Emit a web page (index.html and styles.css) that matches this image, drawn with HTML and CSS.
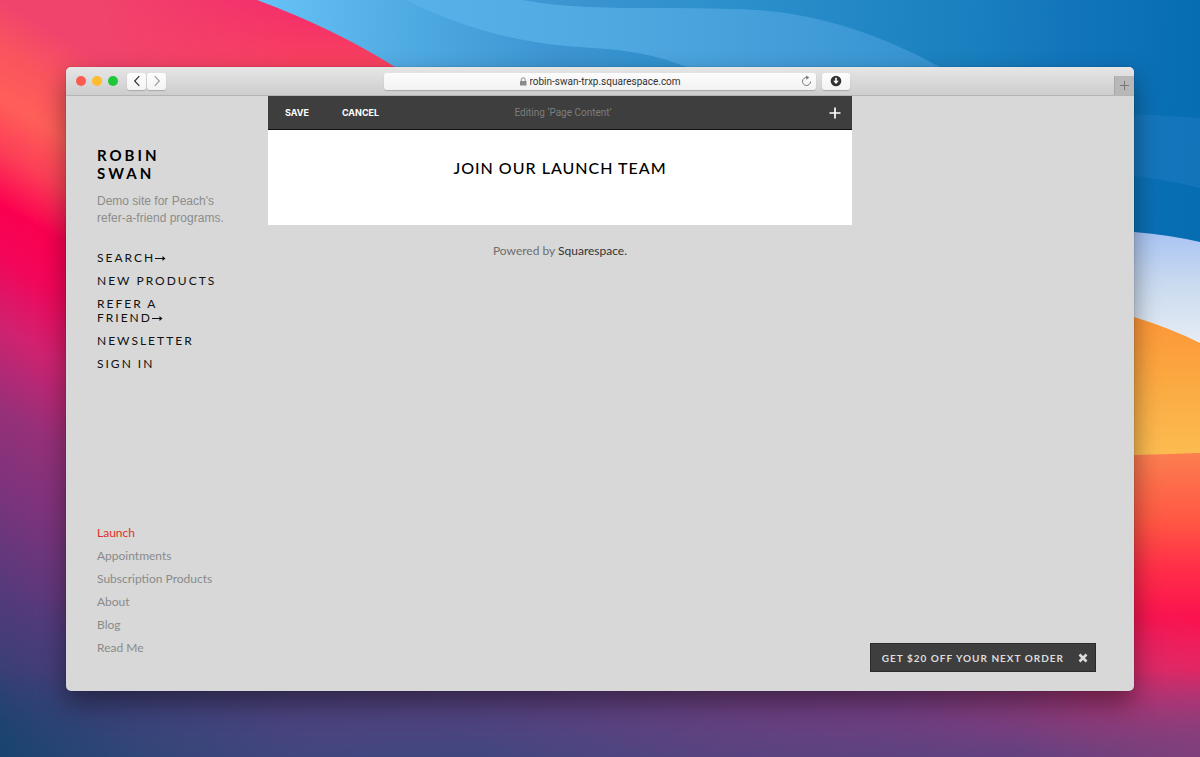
FILE: index.html
```html
<!DOCTYPE html>
<html lang="en">
<head>
<meta charset="utf-8">
<title>Robin Swan</title>
<link rel="stylesheet" href="styles.css">
</head>
<body>
<svg class="wallpaper" viewBox="0 0 1200 757" preserveAspectRatio="none" aria-hidden="true">
  <defs>
    <linearGradient id="warm" gradientUnits="userSpaceOnUse" x1="0" y1="0" x2="-334" y2="557">
      <stop offset="0" stop-color="#f1446c"/><stop offset=".06" stop-color="#f9535f"/><stop offset=".13" stop-color="#ff5f58"/><stop offset=".2" stop-color="#fc3d57"/><stop offset=".27" stop-color="#fb0050"/><stop offset=".34" stop-color="#f2065a"/><stop offset=".43" stop-color="#d02270"/><stop offset=".54" stop-color="#963079"/><stop offset=".66" stop-color="#78347c"/><stop offset=".78" stop-color="#553a7b"/><stop offset=".9" stop-color="#364076"/><stop offset="1" stop-color="#1a4470"/>
    </linearGradient>
    <linearGradient id="pink" gradientUnits="userSpaceOnUse" x1="0" y1="70" x2="0" y2="0">
      <stop offset="0" stop-color="#f8425e"/><stop offset="1" stop-color="#f42c6c"/>
    </linearGradient>
    <linearGradient id="pinkfade" gradientUnits="userSpaceOnUse" x1="100" y1="0" x2="300" y2="0">
      <stop offset="0" stop-color="#fff" stop-opacity="0"/><stop offset="1" stop-color="#fff"/>
    </linearGradient>
    <mask id="side"><rect width="500" height="100" fill="url(#pinkfade)"/></mask>
    <linearGradient id="coral" gradientUnits="userSpaceOnUse" x1="0" y1="453" x2="0" y2="757">
      <stop offset="0" stop-color="#fb7e50"/><stop offset=".22" stop-color="#ff5843"/><stop offset=".38" stop-color="#ff2e48"/><stop offset=".54" stop-color="#fb134f"/><stop offset=".7" stop-color="#e52663"/><stop offset=".85" stop-color="#b83474"/><stop offset="1" stop-color="#80407e"/>
    </linearGradient>
    <linearGradient id="floor" gradientUnits="userSpaceOnUse" x1="0" x2="1200" y1="0" y2="0">
      <stop offset="0" stop-color="#40407a" stop-opacity="0"/><stop offset=".12" stop-color="#47407c"/><stop offset=".25" stop-color="#55407e"/><stop offset=".5" stop-color="#6b3f80"/><stop offset=".75" stop-color="#863a82"/><stop offset=".86" stop-color="#a5377a"/><stop offset="1" stop-color="#d42c6a" stop-opacity="0"/>
    </linearGradient>
    <linearGradient id="deep" gradientUnits="userSpaceOnUse" x1="0" x2="1200" y1="0" y2="0">
      <stop offset="0" stop-color="#1a4470"/><stop offset=".12" stop-color="#324678"/><stop offset=".25" stop-color="#42467f"/><stop offset=".4" stop-color="#404780"/><stop offset=".6" stop-color="#56447f"/><stop offset=".85" stop-color="#60427f"/><stop offset="1" stop-color="#80407c"/>
    </linearGradient>
    <linearGradient id="fade" x1="0" x2="0" y1="0" y2="1">
      <stop offset="0" stop-color="#fff" stop-opacity="0"/><stop offset="1" stop-color="#fff"/>
    </linearGradient>
    <mask id="rise"><rect x="0" y="670" width="1200" height="90" fill="url(#fade)"/></mask>
    <mask id="lift"><rect x="0" y="600" width="1200" height="70" fill="url(#fade)"/><rect x="0" y="670" width="1200" height="90" fill="#fff"/></mask>
    <linearGradient id="sky" gradientUnits="userSpaceOnUse" x1="260" y1="0" x2="1200" y2="60">
      <stop offset="0" stop-color="#66c2f6"/><stop offset=".2" stop-color="#4aa5de"/><stop offset=".32" stop-color="#3c94d0"/><stop offset=".5" stop-color="#2c90cc"/><stop offset=".75" stop-color="#1a80bf"/><stop offset=".86" stop-color="#1275bb"/><stop offset="1" stop-color="#066db2"/>
    </linearGradient>
    <linearGradient id="wave" gradientUnits="userSpaceOnUse" x1="400" y1="0" x2="950" y2="0">
      <stop offset="0" stop-color="#58b2ea"/><stop offset=".4" stop-color="#50a8e0"/><stop offset="1" stop-color="#3592d0"/>
    </linearGradient>
    <linearGradient id="cloud" gradientUnits="userSpaceOnUse" x1="0" y1="232" x2="0" y2="343">
      <stop offset="0" stop-color="#a9c4f4"/><stop offset=".45" stop-color="#c8daf0"/><stop offset="1" stop-color="#e6ecf4"/>
    </linearGradient>
    <linearGradient id="sun" gradientUnits="userSpaceOnUse" x1="0" y1="317" x2="0" y2="454">
      <stop offset="0" stop-color="#fd9637"/><stop offset=".5" stop-color="#fbaa42"/><stop offset="1" stop-color="#fcbc50"/>
    </linearGradient>
  </defs>
  <rect width="1200" height="757" fill="url(#warm)"/>
  <rect x="100" width="340" height="100" fill="url(#pink)" mask="url(#side)"/>
  <path d="M1000 440H1200V757H1000Z" fill="url(#coral)"/>
  <rect y="600" width="1200" height="157" fill="url(#floor)" mask="url(#lift)"/>
  <rect y="640" width="1200" height="117" fill="url(#deep)" mask="url(#rise)"/>
  <path d="M1000 456 1134 455Q1170 454 1200 453V300H1000Z" fill="url(#sun)"/>
  <path d="M1000 290Q1110 309 1134 317Q1170 328 1200 343V200H1000Z" fill="url(#cloud)"/>
  <path d="M257 0Q335 29 395 67L600 225H1000Q1110 228 1134 232Q1170 235 1200 242V0Z" fill="url(#sky)"/>
  <path d="M406 0C470 32 530 45 593 48C635 50 670 58 702 74H952C890 38 815 9 730 9C650 6 590 12 522 0Z" fill="url(#wave)"/>
  <path d="M1100 113Q1150 114 1200 118V188Q1150 176 1100 172Z" fill="#1d7abf" opacity=".6"/>
</svg>

<div class="window">
  <header class="toolbar">
    <div class="toolbar-start">
      <div class="lights"><span class="light light-close"></span><span class="light light-min"></span><span class="light light-max"></span></div>
      <div class="history">
        <button class="chip" type="button" aria-label="Back"><svg width="8" height="12" viewBox="0 0 8 12"><path d="M6.3 1.2 1.7 6l4.6 4.8" fill="none" stroke="#333" stroke-width="1.2"/></svg></button>
        <button class="chip" type="button" aria-label="Forward"><svg width="8" height="12" viewBox="0 0 8 12"><path d="M1.7 1.2 6.3 6l-4.6 4.8" fill="none" stroke="#999" stroke-width="1.1"/></svg></button>
      </div>
    </div>
    <form class="address">
      <div class="location">
        <svg width="8" height="9" viewBox="0 0 8 9"><rect x="1" y="4" width="6.5" height="4.6" rx=".6" fill="#8a8a8a"/><path d="M2.3 4V2.7a1.95 1.95 0 0 1 3.9 0V4" fill="none" stroke="#8a8a8a"/></svg>
        <input class="url" type="text" aria-label="Address" value="robin-swan-trxp.squarespace.com">
      </div>
      <button class="reload" type="button" aria-label="Reload"><svg width="11" height="12" viewBox="0 0 11 12"><path d="M6 2.5A4 4 0 1 0 9.5 6.5" fill="none" stroke="#777"/><path d="M5.2.4 8.3 2.5 5.2 4.8Z" fill="#777"/></svg></button>
    </form>
    <div class="toolbar-end">
      <button class="chip chip-wide" type="button" aria-label="Downloads"><svg width="12" height="12" viewBox="0 0 12 12"><circle cx="6" cy="6" r="5.3" fill="#333"/><path d="M6 2.8V7" stroke="#fff" stroke-width="1.6"/><path d="M3.2 5.8H8.8L6 9Z" fill="#fff"/></svg></button>
      <button class="new-tab" type="button" aria-label="New tab"><svg width="9" height="9" viewBox="0 0 9 9"><path d="M4.5 0V9M0 4.5H9" stroke="#777"/></svg></button>
    </div>
  </header>

  <div class="page">
    <aside class="sidebar">
      <h1 class="brand">ROBIN<br>SWAN</h1>
      <p class="tagline">Demo site for Peach's refer-a-friend programs.</p>
      <nav class="menu" aria-label="Main">
        <a href="#">SEARCH<svg class="arrow" viewBox="0 0 11 7"><path d="M0 3.5H9" stroke="currentColor"/><path d="M7.5 1 10.5 3.5 7.5 6Z" fill="currentColor"/></svg></a>
        <a href="#">NEW PRODUCTS</a>
        <a href="#">REFER A<br>FRIEND<svg class="arrow" viewBox="0 0 11 7"><path d="M0 3.5H9" stroke="currentColor"/><path d="M7.5 1 10.5 3.5 7.5 6Z" fill="currentColor"/></svg></a>
        <a href="#">NEWSLETTER</a>
        <a href="#">SIGN IN</a>
      </nav>
      <nav class="links" aria-label="Secondary">
        <a class="current" href="#">Launch</a>
        <a href="#">Appointments</a>
        <a href="#">Subscription Products</a>
        <a href="#">About</a>
        <a href="#">Blog</a>
        <a href="#">Read Me</a>
      </nav>
    </aside>
    <main class="main">
      <div class="editor-bar">
        <div class="editor-actions">
          <button class="editor-button" type="button">SAVE</button>
          <button class="editor-button" type="button">CANCEL</button>
        </div>
        <span class="editor-title">Editing ‘Page Content’</span>
        <button class="editor-add" type="button" aria-label="Add block"><svg width="12" height="12" viewBox="0 0 12 12"><path d="M6 .5V11.5M.5 6H11.5" stroke="#fff" stroke-width="1.7"/></svg></button>
      </div>
      <section class="block"><h2 class="headline">JOIN OUR LAUNCH TEAM</h2></section>
      <footer class="powered">Powered by <a href="#">Squarespace.</a></footer>
    </main>
    <div class="promo">
      <a href="#">GET $20 OFF YOUR NEXT ORDER</a>
      <button class="promo-close" type="button" aria-label="Close"><svg width="10" height="10" viewBox="0 0 10 10"><path d="M1.5 1.5 8.5 8.5M8.5 1.5 1.5 8.5" stroke="#ddd" stroke-width="2.6"/></svg></button>
    </div>
  </div>
</div>
</body>
</html>
```

FILE: styles.css
```css
* { box-sizing: border-box; }

body {
  margin: 0;
  min-height: 100vh;
  padding: 67px 66px 66px;
  display: flex;
  font-family: Lato, "Open Sans", sans-serif;
}

a { color: inherit; text-decoration: none; }

button {
  border: 0;
  padding: 0;
  background: none;
  font: inherit;
  color: inherit;
  display: flex;
  align-items: center;
  justify-content: center;
}

.wallpaper {
  position: absolute;
  inset: 0;
  width: 100%;
  height: 100%;
  z-index: -1;
}

.window {
  flex: 1;
  display: flex;
  flex-direction: column;
  border-radius: 5px;
  overflow: hidden;
  background: #d8d8d8;
  box-shadow: 0 0 1px rgba(0, 0, 0, .6), 0 12px 26px rgba(0, 0, 0, .42);
}

.toolbar {
  height: 29px;
  display: grid;
  grid-template-columns: 1fr minmax(0, 432px) 1fr;
  align-items: center;
  background: linear-gradient(#e6e6e6, #cdcdcd);
  border-bottom: 1px solid #b4b4b4;
}

.toolbar-start { display: flex; align-items: center; gap: 9px; padding-left: 10px; }
.lights { display: flex; gap: 6px; }
.light { width: 10px; height: 10px; border-radius: 50%; }
.light-close { background: #fc5b53; }
.light-min { background: #fdbc2e; }
.light-max { background: #1fc83a; }
.history { display: flex; gap: 1px; }

.chip {
  width: 19px;
  height: 17px;
  border-radius: 3px;
  background: linear-gradient(#fdfdfd, #f4f4f4);
  box-shadow: 0 1px 1px rgba(0, 0, 0, .2);
}
.chip-wide { width: 28px; }

.address {
  margin: 0;
  height: 17px;
  display: grid;
  grid-template-columns: 1fr auto 1fr;
  align-items: center;
  border-radius: 3px;
  background: linear-gradient(#fcfcfc, #f2f2f2);
  box-shadow: 0 1px 1px rgba(0, 0, 0, .2);
}
.location { grid-column: 2; display: flex; align-items: center; gap: 3px; }
.url {
  width: 152px;
  border: 0;
  padding: 0;
  background: none;
  font: 10px/15px Roboto, sans-serif;
  color: #333;
}
.reload { justify-self: end; margin-right: 4px; }

.toolbar-end {
  height: 100%;
  display: flex;
  align-items: center;
  justify-content: space-between;
  padding-left: 6px;
}
.new-tab {
  align-self: flex-end;
  width: 20px;
  height: 19px;
  background: #b8b8b8;
  border-left: 1px solid #a8a8a8;
}

.page {
  flex: 1;
  position: relative;
  display: grid;
  grid-template-columns: 202px minmax(0, 1fr) 282px;
}

.sidebar {
  display: flex;
  flex-direction: column;
  padding: 50px 31px 36px;
}
.brand {
  margin: 0;
  font-size: 15px;
  line-height: 18px;
  font-weight: 700;
  letter-spacing: 3px;
  color: #000;
}
.tagline {
  margin: 11px 0 24px;
  font: 12px/17px "Liberation Sans", Arial, sans-serif;
  color: #8c8c8c;
}
.menu, .links { display: flex; flex-direction: column; gap: 9px; line-height: 14px; white-space: nowrap; }
.menu { font-size: 12px; letter-spacing: 2px; color: #111; }
.arrow { width: 11px; height: 7px; }
.links { margin-top: auto; font-size: 12px; color: #8a8a8a; }
.current { color: #e0301e; }

.editor-bar {
  height: 34px;
  padding: 1px 11px 0 17px;
  display: grid;
  grid-template-columns: 1fr auto 1fr;
  align-items: center;
  background: #3e3e3e;
  border-bottom: 1px solid #111;
  color: #fff;
}
.editor-actions { display: flex; gap: 33px; }
.editor-button { font: 700 9px/12px Inter, sans-serif; }
.editor-title { font: 10px/12px Roboto, sans-serif; color: #7d7d7d; }
.editor-add { justify-self: end; }

.block { background: #fff; padding: 28px 16px 47px; text-align: center; }
.headline {
  margin: 0;
  font-size: 16px;
  line-height: 20px;
  font-weight: 500;
  letter-spacing: 1px;
  color: #000;
}
.powered {
  padding: 18px 0;
  text-align: center;
  font-size: 12px;
  line-height: 16px;
  color: #6e6e6e;
}
.powered a { color: #333; }

.promo {
  position: absolute;
  right: 38px;
  bottom: 19px;
  height: 29px;
  padding: 0 7px 0 11px;
  display: flex;
  align-items: center;
  gap: 14px;
  background: #3e3e3e;
  border: 1px solid #2a2a2a;
  font-size: 10px;
  font-weight: 700;
  letter-spacing: 1px;
  color: #ddd;
}
```
